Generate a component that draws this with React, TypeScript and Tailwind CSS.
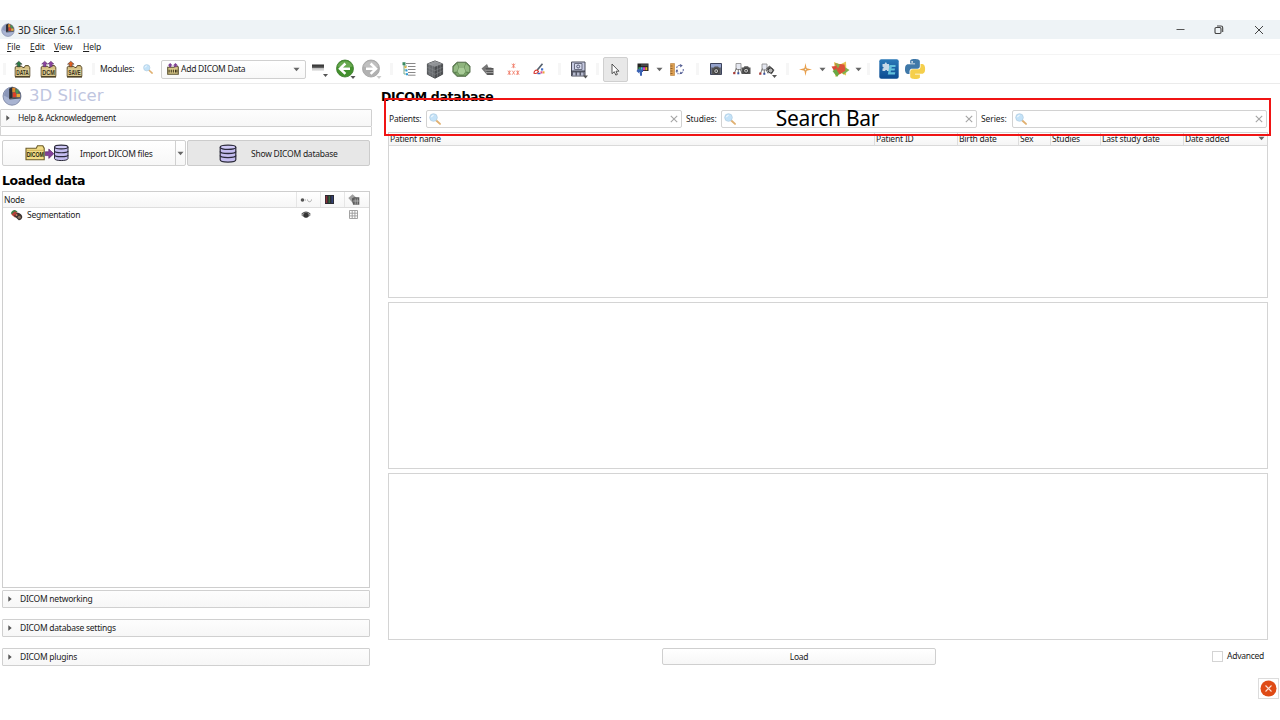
import React from "react";

type Kids = { children?: React.ReactNode };

const Svg = ({ w, h, vb, children, className = "" }: { w: number; h: number; vb?: string; className?: string } & Kids) => (
  <svg width={w} height={h} viewBox={vb ?? `0 0 ${w} ${h}`} className={"block shrink-0 overflow-visible " + className}>
    {children}
  </svg>
);

const Slot = ({ w, children }: { w: string } & Kids) => (
  <div className={"flex h-full shrink-0 items-center justify-center " + w}>{children}</div>
);

const Grip = ({ w }: { w: string }) => (
  <div className={"flex h-full shrink-0 items-center justify-center " + w}>
    <div className="h-3 w-[3px] bg-[#f6f6f6]" />
  </div>
);

const Down = () => (
  <Svg w={7} h={5}>
    <path d="M0.5 0.8h6L3.5 4.3z" fill="#666" />
  </Svg>
);

const SlicerLogo = ({ s }: { s: number }) => (
  <Svg w={s} h={s} vb="0 0 20 20">
    <circle cx="10" cy="10.2" r="9" fill="#a9b4d2" stroke="#7d87a5" strokeWidth="0.9" />
    <path d="M7.600 2A8.400 8.400 0 0 0 2 9.500l5.600 3z" fill="#8b97b9" />
    <path d="M7.300 2.500L10.500.8l4 1.700 4 4.500v4.500l-11.200 1.300z" fill="#54575f" />
    <path d="M7.300 2.800l3-1.600v10.600l-3 1.200z" fill="#2b2d33" />
    <path d="M10.300 1.800h3v4.500h-3z" fill="#df8a2c" />
    <path d="M13.600 3.500h2.800v4h-2.800z" fill="#4a9650" />
    <path d="M10.700 6.500h3.300v4.700h-3.300z" fill="#dd3f27" />
    <path d="M14.500 7.800h3.500v3.400h-3.500z" fill="#e6a93a" />
    <path d="M7.500 13l11-1.100" stroke="#4a4d55" strokeWidth="1.100" />
  </Svg>
);

const FolderIcon = ({ label, color, two }: { label: string; color: string; two?: boolean }) => (
  <Svg w={17} h={17}>
    <path d="M1.200 15.500V6.200l1-.9h5.600l.9 1.200h1.600l1-1.900h3.200l1.300 2v8.900z" fill="#d6c183" stroke="#57492a" strokeWidth="1" />
    <path d="M1.700 7.800h13.600v7H1.700z" fill="#dccb92" />
    {two ? (
      <path d="M4.700.2l3 2.800H6v2.700H3.400V3H1.700zM10.900.2l3 2.800h-1.700v2.700H9.600V3H7.900z" fill={color} stroke="#54305f" strokeWidth=".5" />
    ) : (
      <path d="M4.800.2l3.300 3H6.200v2.600H3.400V3.200H1.500z" fill={color} stroke="#333" strokeWidth=".5" />
    )}
    <text x="8.500" y="13.700" letterSpacing="0" textAnchor="middle" textLength="12.500" lengthAdjust="spacingAndGlyphs" fontFamily="Liberation Sans" fontWeight="bold" fontSize="6.500" fill="#3a321c">
      {label}
    </text>
    <path d="M1 16h15" stroke="#4a3f22" strokeWidth="1.200" />
  </Svg>
);

const Magnifier = ({ s }: { s: number }) => (
  <Svg w={s} h={s} vb="0 0 12 12">
    <path d="M7 7.200l4 3.700" stroke="#e0b070" strokeWidth="1.900" strokeLinecap="round" />
    <circle cx="4.500" cy="4.500" r="3.800" fill="#c3e2f8" stroke="#b3cee2" strokeWidth="0.800" />
    <path d="M2.500 4.200a2.200 2.200 0 0 1 2-1.800" stroke="#fff" strokeWidth="1" fill="none" />
  </Svg>
);

const Corner = ({ x, y, c = "#555" }: { x: number; y: number; c?: string }) => (
  <path d={`M${x} ${y}h5l-2.5 3z`} fill={c} />
);

const RoundArrow = ({ back }: { back?: boolean }) => (
  <Svg w={21} h={21}>
    <circle cx="10" cy="9.500" r="8.500" fill={back ? "#43902e" : "#b1b1b1"} stroke={back ? "#3a7a2a" : "#a0a0a0"} strokeWidth="0.800" />
    <path d="M2.500 7.500a8 8 0 0 1 15 0q-7 2-15 0z" fill={back ? "#68a950" : "#c0c0c0"} />
    <path
      d={back ? "M10.400 4.500L5 9.700l5.400 5.200M5.500 9.700H15" : "M9.600 4.500L15 9.700l-5.400 5.200M14.500 9.700H5"}
      fill="none" stroke="#fff" strokeWidth="2.500"
    />
    <Corner x={15.500} y={17} c={back ? "#555" : "#ccc"} />
  </Svg>
);

const Database = ({ w, h }: { w: number; h: number }) => (
  <Svg w={w} h={h} vb="0 0 18 19">
    <path d="M1.200 3.200v12.600c0 3 15.600 3 15.600 0V3.200" fill="#c4bdf0" stroke="#2b2a3b" strokeWidth="1.200" />
    <ellipse cx="9" cy="3.300" rx="7.800" ry="2.100" fill="#d0caf8" stroke="#2b2a3b" strokeWidth="1.300" />
    <path d="M1.200 7.500c0 2.700 15.600 2.700 15.600 0M1.200 11.600c0 2.700 15.600 2.700 15.600 0" fill="none" stroke="#2b2a3b" strokeWidth="1.400" />
  </Svg>
);

const DicomImport = () => (
  <Svg w={44} h={18}>
    <path d="M1 15.800V4.200h10.300l1.200-2.500h5.300l1.400 2.500v11.600z" fill="#f1dc87" stroke="#6b5b28" strokeWidth="1.100" />
    <path d="M1.500 6.300h17.500" stroke="#c8ab4b" strokeWidth=".8" />
    <text x="10.200" y="12.600" letterSpacing="0" textAnchor="middle" textLength="17" lengthAdjust="spacingAndGlyphs" fontFamily="Liberation Sans" fontWeight="bold" fontSize="6.500" fill="#221c0a">DICOM</text>
    <path d="M20.300 7.800h3.500V5l5 4.700-5 4.700v-2.800h-3.500z" fill="#83409a" stroke="#5c2a6c" strokeWidth=".7" />
    <path d="M29.500 3v11.600c0 2.600 13.500 2.600 13.500 0V3" fill="#c4bdf0" stroke="#2b2a3b" />
    <ellipse cx="36.250" cy="3" rx="6.750" ry="1.900" fill="#d0caf8" stroke="#2b2a3b" strokeWidth="1.100" />
    <path d="M29.500 7c0 2.300 13.500 2.300 13.500 0M29.500 10.900c0 2.300 13.500 2.300 13.500 0" fill="none" stroke="#2b2a3b" strokeWidth="1.200" />
  </Svg>
);

const Camera = ({ x, y }: { x: number; y: number }) => (
  <g transform={`translate(${x} ${y})`}>
    <path d="M0 1.500h2L3 .2h3.500l1 1.300H9V8H0z" fill="#555" />
    <circle cx="4.600" cy="4.700" r="2.400" fill="#c9c9c9" stroke="#222" strokeWidth=".8" />
    <circle cx="4.600" cy="4.700" r=".9" fill="#444" />
  </g>
);

const SceneGlyph = () => (
  <g>
    <path d="M3 1.500h5v6H3z" fill="#e4e7f0" stroke="#888" strokeWidth=".8" />
    <path d="M3.500 6L1 12M7 7l2 4M5.300 7v4" stroke="#666" strokeWidth=".9" fill="none" />
    <path d="M.2 10h2.200v2.200H.2z" fill="#a93c36" />
    <path d="M4.300 10.300h2v2h-2z" fill="#38529d" />
  </g>
);

const Toolbar = () => (
  <div className="flex h-[30px] items-center border-y border-b-[#ebebeb] border-t-[#f4f4f4]">
    <Grip w="w-[9px]" />
    <Slot w="w-[26px]"><FolderIcon label="DATA" color="#2c7a45" /></Slot>
    <Slot w="w-[26px]"><FolderIcon label="DCM" color="#8a44a0" two /></Slot>
    <Slot w="w-[26px]"><FolderIcon label="SAVE" color="#e2601f" /></Slot>
    <Grip w="w-[13px]" />
    <div className="w-[34px] shrink-0 whitespace-nowrap pt-px tracking-[-0.3px]">Modules:</div>
    <Slot w="w-[27px]"><Magnifier s={10} /></Slot>
    <div className="flex h-[19px] w-[145px] shrink-0 items-center rounded-[2px] border border-[#d0d0d0] bg-gradient-to-b from-white to-[#f8f8f8] pl-[5px] pr-[5px]">
      <Svg w={12} h={12} vb="0 0 17 17">
        <path d="M1 16V6h9l1-1.500h4L16 6v10z" fill="#d9c888" stroke="#5a512e" strokeWidth="1.500" />
        <path d="M4.500 0l3.500 3.500H6V6H3V3.500H1zM12 0l3.500 3.500H13.500V6h-3V3.500H8.500z" fill="#7c3f92" />
        <path d="M3 9.500v4M6 9.500v4M9 9.500v4M12 9.500v4M14 9.500v4" stroke="#28220f" strokeWidth="1.300" />
      </Svg>
      <span className="ml-[2px] flex-1 whitespace-nowrap pt-px">Add DICOM Data</span>
      <Down />
    </div>
    <Slot w="w-[28px]">
      <Svg w={16} h={16}>
        <defs><linearGradient id="bar" x1="0" y1="0" x2="0" y2="1"><stop offset="0" stopColor="#2c2c2c" /><stop offset=".45" stopColor="#555" /><stop offset=".55" stopColor="#bbb" /><stop offset="1" stopColor="#eee" /></linearGradient></defs>
        <path d="M0 3.500h12v6.500H0z" fill="url(#bar)" />
        <Corner x={11} y={13} />
      </Svg>
    </Slot>
    <Slot w="w-[23px]"><RoundArrow back /></Slot>
    <Slot w="w-[28px]"><RoundArrow /></Slot>
    <Grip w="w-[12px]" />
    <Slot w="w-[24px]">
      <Svg w={14} h={14}>
        <path d="M2 1v11M2 4h3M2 8h3M2 12h3" stroke="#7fae90" fill="none" />
        <path d="M4 1.500h9.500M6 4.500h7.500M6 7.500h7.500M6 10.500h7.500M6 13.200h7.500" stroke="#888" />
        <path d="M.5.200h3v3h-3z" fill="#3c8c62" /><path d="M2.500 4.200h2v2h-2z" fill="#e4b23c" /><path d="M3.500 7.500h2v2h-2zM4 11.300h2v2h-2z" fill="#2e9ad8" />
      </Svg>
    </Slot>
    <Slot w="w-[27px]">
      <Svg w={18} h={19}>
        <path d="M9 .9l7.600 3v10.300L9 18.200 1.400 14.200V3.900z" fill="#66696c" stroke="#505254" />
        <path d="M9 .9l7.600 3L9 6.800 1.400 3.900z" fill="#9b9da0" />
        <path d="M9 6.800l7.600-2.900v10.300L9 18.200z" fill="#4c4e51" />
        <path d="M3.800 5v10M6.400 6v10.500M11.600 6v10.500M14.200 5v10M1.400 7.300L9 10.600l7.600-3.300M1.400 10.700L9 14.400l7.600-3.700M3.800 3l7.700 3M6.400 2l7.700 3M14 3L6.400 6" stroke="#85888b" strokeWidth=".6" fill="none" />
      </Svg>
    </Slot>
    <Slot w="w-[26px]">
      <Svg w={19} h={17}>
        <path d="M5 1.200h9l4 4v6L14 15.300H5L.9 11.300v-6z" fill="#5f8552" stroke="#5a7350" />
        <path d="M5.500 2h8L12 6.500H7z" fill="#8fb57e" /><path d="M7 6.500h5l1.500 4-2 3h-4l-2-3z" fill="#a9cc98" />
        <path d="M5 2.500l1.500 4-1.500 4-3.300.5V6zM14 2.500l-1.500 4 1.500 4 3.300.5V6z" fill="#94ba83" />
        <path d="M5.500 11l2 3.500h-2l-2-2zM13.500 11l-2 3.500h2l2-2z" fill="#79a368" />
      </Svg>
    </Slot>
    <Slot w="w-[27px]">
      <Svg w={13} h={13}>
        <path d="M.5 5.500L6 1l1.500 3.500h3V12H6z" fill="#777" /><path d="M4.500 5h8v7h-6z" fill="#555" />
        <path d="M4.500 7.200h8M5 9.600h7.500" stroke="#c4c4c4" strokeWidth=".7" />
      </Svg>
    </Slot>
    <Slot w="w-[25px]">
      <Svg w={13} h={13}>
        <path d="M4.800.8l3.400 4m0-4l-3.400 4M6.500.4v4.800M.8 7.700l3 4m0-4l-3 4M2.300 7.400v4.600M5.300 7.700l2.500 4m0-4l-2.500 4M9.300 7.700l2.900 4m0-4l-2.900 4M10.700 7.400v4.600" stroke="#f07a66" strokeWidth=".8" />
      </Svg>
    </Slot>
    <Slot w="w-[26px]">
      <Svg w={12} h={12}>
        <path d="M9.500.8L4.300 7" stroke="#55606e" strokeWidth="1.700" />
        <path d="M1 10.300q0-3 3-3.300l1.500 1.500q-1 2.500-4.500 1.800z" fill="none" stroke="#d93a32" strokeWidth="1.100" />
        <path d="M4.500 10.500h3" stroke="#3e68c4" strokeWidth="1.500" />
        <path d="M8 5.300h2.200v2.200H8z" fill="#4672c8" /><path d="M7.500 8.300h2v2.200h-2z" fill="#e14a92" /><path d="M9.700 8.300h1.800v2.200H9.700z" fill="#eba43a" />
      </Svg>
    </Slot>
    <Grip w="w-[14px]" />
    <Slot w="w-[26px]">
      <Svg w={18} h={19}>
        <path d="M1.500 2h13.500v14H1.500z" fill="#c6cae2" stroke="#4d4f5c" />
        <path d="M4.500 3.500h7.500v6H4.500z" fill="#d5d9ec" stroke="#6a6d80" /><circle cx="8.200" cy="6.500" r="1.500" fill="none" stroke="#505672" />
        <path d="M1.500 11.200h13.500" stroke="#343640" strokeWidth="1.300" /><path d="M2 11.500h12.500v4H2z" fill="#555866" />
        <path d="M3 12.500h2.500v3H3zM7 12.500h2.500v3H7zM11 12.500h2.500v3H11z" fill="#b5b9cd" />
        <Corner x={13} y={15.500} />
      </Svg>
    </Slot>
    <Grip w="w-[11px]" />
    <div className="flex h-[25px] w-[25px] shrink-0 items-center justify-center rounded-[2px] border border-[#cfcfcf] bg-[#e8e8e8]">
      <Svg w={9} h={13}>
        <path d="M1 1v9.700l2.300-2 1.500 3.400 1.600-.7L5 8.200h3z" fill="#fff" stroke="#444" strokeWidth=".9" />
      </Svg>
    </div>
    <Slot w="w-[28px]">
      <Svg w={13} h={13}>
        <path d="M1.500.500h11v7.500h-11z" fill="#222" />
        <path d="M5 1.200h6.800v2H5z" fill="#4a4a4a" />
        <path d="M2.500 4.200h2v3h-2z" fill="#36a24b" /><path d="M4.700 4.200h2v3h-2z" fill="#4cb6ed" /><path d="M7 4.200h2v3H7z" fill="#d93bc2" /><path d="M9.300 4.200h2v3h-2z" fill="#e7b52c" />
        <path d="M7 6.500H3.500V5L.4 8l3.100 2.800V9H4v3.800h2V9h1z" fill="#3a62b4" />
      </Svg>
    </Slot>
    <Slot w="w-[7px]"><Down /></Slot>
    <Slot w="w-[28px]">
      <Svg w={14} h={13}>
        <path d="M.5.500h4v12h-4z" fill="#dda052" stroke="#b97f3a" strokeWidth=".6" />
        <path d="M.5 3h2M.5 5.500h2M.5 8h2M.5 10.500h2" stroke="#74471a" strokeWidth=".7" />
        <path d="M6.500 5q1-3 4-2.500M13.300 6q.3 3-2 4M6.500 7.500q.3 2.500 2 3.500" stroke="#7d86b4" strokeWidth="1.300" strokeDasharray="2 .8" fill="none" />
        <path d="M10 1l2.800 1.500L10.300 4.500zM12.300 10.800l-3 .5 1.500-2.800zM5.500 8.500L7 6l1.300 2.500z" fill="#515b90" />
      </Svg>
    </Slot>
    <Grip w="w-[12px]" />
    <Slot w="w-[26px]">
      <Svg w={12} h={12}><path d="M.5.500h11v11H.5z" fill="#77839f" stroke="#3c435c" /><path d="M1 1h10v3H1z" fill="#95a3cc" /><Camera x={1.600} y={3.400} /></Svg>
    </Slot>
    <Slot w="w-[26px]"><Svg w={18} h={14}><SceneGlyph /><Camera x={8.500} y={4} /></Svg></Slot>
    <Slot w="w-[27px]">
      <Svg w={19} h={17}>
        <g transform="translate(0 1.500)"><SceneGlyph /></g>
        <path d="M7 7.500l3.500-3 5 4.500-3 4.500z" fill="#666" /><circle cx="11.500" cy="9.500" r="2.500" fill="#b5b5b5" stroke="#333" />
        <Corner x={13} y={14} />
      </Svg>
    </Slot>
    <Grip w="w-[10px]" />
    <Slot w="w-[26px]">
      <Svg w={13} h={13}><path d="M6.500 0l1.100 5.200 5.400 1.300-5.400 1.300-1.100 5.200-1.100-5.200L0 6.500l5.400-1.300z" fill="#eba04a" /><circle cx="6.500" cy="6.500" r="1.200" fill="#fff3dc" stroke="#b86e1d" strokeWidth=".5" /></Svg>
    </Slot>
    <Slot w="w-[8px]"><Down /></Slot>
    <Slot w="w-[28px]">
      <Svg w={19} h={17}>
        <path d="M3 1l6 2.500L15 .5l.3 7-.3 7-5-2.500-5.500 4z" fill="#e8c555" />
        <path d="M.5 5.500L5 5l3 4-3 4.500z" fill="#d9493a" />
        <path d="M1.500 10l5-3 4 3-4.500 6z" fill="#6aa843" />
        <path d="M12 5l6.500 4-6 4.500-3-4z" fill="#7fb24e" />
        <path d="M4 2.500l9.500 1 1 6-6 4-2.500-4z" fill="#dc5339" />
        <path d="M4 2l5 1.500-2 4z" fill="#8cb04c" />
      </Svg>
    </Slot>
    <Slot w="w-[8px]"><Down /></Slot>
    <Grip w="w-[13px]" />
    <Slot w="w-[28px]">
      <Svg w={20} h={20}>
        <defs><linearGradient id="ext" x1="0" y1="0" x2="0" y2="1"><stop offset="0" stopColor="#2b79b8" /><stop offset="1" stopColor="#0b4a91" /></linearGradient></defs>
        <rect x=".3" y=".3" width="19.400" height="19.400" rx="2" fill="url(#ext)" />
        <path d="M3.500 5h2.300c-.5-2 2.500-2 2 0h2.300v2.300c1.800-.5 1.800 2 0 1.800v3H8c.3-1.500-2-1.500-1.800 0H3.500V9.500c1.500.2 1.500-2 0-1.800z" fill="#c7d9e8" />
        <path d="M10.500 6h6v2h-3.700l-.4 1.500H16l-.4 2h-3.600l-.4 1.800h4.700l-.4 2.200H8.800z" fill="#62c0dc" />
      </Svg>
    </Slot>
    <Slot w="w-[24px]">
      <Svg w={20} h={20} vb="0 0 24 24">
        <path fill="#3f78a8" d="M14.250.18l.9.2.73.26.59.3.45.32.34.34.25.34.16.33.1.3.04.26.02.2-.01.13V8.500l-.05.63-.13.55-.21.46-.26.38-.3.31-.33.25-.35.19-.35.14-.33.1-.3.07-.26.04-.21.02H8.770l-.69.05-.59.14-.5.22-.41.27-.33.32-.27.35-.2.36-.15.37-.1.35-.07.32-.04.27-.02.21v3.060H3.170l-.21-.03-.28-.07-.32-.12-.35-.18-.36-.26-.36-.36-.35-.46-.32-.59-.28-.73-.21-.88-.14-1.050L0 11.970l.06-1.220.16-1.040.24-.87.32-.71.36-.57.4-.44.42-.33.42-.24.4-.16.36-.1.32-.05.24-.01h.16l.06.01h8.160v-.83H6.180l-.01-2.750-.02-.37.05-.34.11-.31.17-.28.25-.26.31-.23.38-.2.44-.18.51-.15.58-.12.64-.1.71-.06.77-.04.84-.02 1.270.05zM8 2.700a1 1 0 1 0 1.300 1.500A1 1 0 0 0 8 2.700z" />
        <path fill="#f5cf4c" d="M21.100 6.110l.28.06.32.12.35.18.36.27.36.35.35.47.32.59.28.73.21.88.14 1.040.05 1.230-.06 1.230-.16 1.040-.24.86-.32.71-.36.57-.4.45-.42.33-.42.24-.4.16-.36.09-.32.05-.24.02-.16-.01h-8.220v.82h5.840l.01 2.760.02.36-.05.34-.11.31-.17.29-.25.25-.31.24-.38.2-.44.17-.51.15-.58.13-.64.09-.71.07-.77.04-.84.01-1.270-.04-1.070-.14-.9-.2-.73-.25-.59-.3-.45-.33-.34-.34-.25-.34-.16-.33-.1-.3-.04-.25-.02-.2.01-.13v-5.340l.05-.64.13-.54.21-.46.26-.38.3-.32.33-.24.35-.2.35-.14.33-.1.3-.06.26-.04.21-.02.13-.01h5.840l.69-.05.59-.14.5-.21.41-.28.33-.32.27-.35.2-.36.15-.36.1-.35.07-.32.04-.28.02-.21V6.070h2.090z" />
      </Svg>
    </Slot>
  </div>
);

const Section = ({ label, className = "" }: { label: string; className?: string }) => (
  <div className={"flex h-[18px] shrink-0 items-center rounded-[1px] border border-[#d0d0d0] bg-gradient-to-b from-[#fdfdfd] to-[#f7f7f7] " + className}>
    <Svg w={4} h={6}><path d="M.3.200v5.600L3.700 3z" fill="#555" /></Svg>
    <span className="pt-px">{label}</span>
  </div>
);

const SearchField = ({ label, gap, w }: { label: string; gap: string; w: string }) => (
  <>
    <span className={"shrink-0 whitespace-nowrap pt-px " + gap}>{label}</span>
    <div className={"flex h-[18px] shrink-0 items-center justify-between rounded-[2px] border border-[#d2d2d2] bg-white pl-[2px] pr-[3px] " + w}>
      <Magnifier s={12} />
      <Svg w={8} h={8}><path d="M.8.800l6.400 6.400M7.200.800L.8 7.200" stroke="#a5a5a5" strokeWidth="1.100" /></Svg>
    </div>
  </>
);

const columns = [
  { label: "Patient name", w: "w-[486px]" },
  { label: "Patient ID", w: "w-[83px]" },
  { label: "Birth date", w: "w-[61px]" },
  { label: "Sex", w: "w-[32px]" },
  { label: "Studies", w: "w-[50px]" },
  { label: "Last study date", w: "w-[83px]" },
  { label: "Date added", w: "flex-1" },
];

const menu = [
  { label: "File", w: "w-[23px]" },
  { label: "Edit", w: "w-[24px]" },
  { label: "View", w: "w-[29px]" },
  { label: "Help", w: "w-[24px]" },
];

const LeftPanel = () => (
  <div className="flex w-[372px] shrink-0 flex-col">
    <div className="flex h-[25px] items-center pb-px pl-[2px]">
      <SlicerLogo s={20} />
      <span className="ml-[7px] pt-px font-['DejaVu_Sans',sans-serif] text-[16.5px] leading-none tracking-[0.05px] text-[#bfc6df]">3D Slicer</span>
    </div>
    <Section label="Help & Acknowledgement" className="gap-[8px] pl-[5px]" />
    <div className="h-[9px] shrink-0 border border-t-0 border-[#d4d4d4]" />
    <div className="mt-[4px] flex h-[26px] shrink-0 gap-[1px] pl-[2px] pr-[2px]">
      <div className="flex w-[184px] rounded-[2px] border border-[#d0d0d0] bg-gradient-to-b from-white to-[#f7f7f7]">
        <div className="flex flex-1 items-center pl-[22px]">
          <DicomImport />
          <span className="ml-[11px] whitespace-nowrap pt-[2px]">Import DICOM files</span>
        </div>
        <div className="flex w-[10px] items-center justify-center border-l border-[#d0d0d0]"><Down /></div>
      </div>
      <div className="flex flex-1 items-center rounded-[2px] border border-[#cccccc] bg-[#e7e7e7] pl-[31px]">
        <Database w={18} h={19} />
        <span className="ml-[14px] whitespace-nowrap pt-[2px]">Show DICOM database</span>
      </div>
    </div>
    <div className="flex h-[25px] shrink-0 items-center pl-[2px] pt-[6px] font-['DejaVu_Sans',sans-serif] text-[12.5px] font-bold leading-none tracking-[-0.4px] text-black">Loaded data</div>
    <div className="ml-[2px] mr-[2px] flex h-[397px] shrink-0 flex-col border border-[#cecece]">
      <div className="flex h-[16px] shrink-0 border-b border-[#dedede] bg-gradient-to-b from-white to-[#f6f6f6]">
        <div className="flex flex-1 items-center pl-[1px] pt-px">Node</div>
        <div className="flex w-[24px] items-center justify-center border-l border-[#e6e6e6] pr-[6px]">
          <Svg w={12} h={6}><circle cx="2.500" cy="3" r="1.800" fill="#555" /><path d="M5 3h1" stroke="#aaa" /><path d="M7.500 2.500c0 3 4 3 4 0" stroke="#aaa" fill="none" /></Svg>
        </div>
        <div className="flex w-[24px] items-center justify-center border-l border-[#e6e6e6] pr-[6px]">
          <Svg w={9} h={9}><path d="M0 0h9v9H0z" fill="#2b2b33" /><path d="M1.500 1v7" stroke="#8c3038" strokeWidth="1.500" /><path d="M4.300 1v7" stroke="#35663c" strokeWidth="1.500" /><path d="M7.200 1v7" stroke="#33437a" strokeWidth="1.500" /></Svg>
        </div>
        <div className="flex w-[25px] items-center justify-center border-l border-[#e6e6e6] pr-[7px]">
          <Svg w={12} h={11}><path d="M.3 4L4.500.3l4.500 4-4 5z" fill="#a0a0a0" /><path d="M3.800 4.500L6 3.300h5.300V10.700H5z" fill="#5c5c5c" /><path d="M5 7h6M7.200 4.500v6M9.300 4.500v6" stroke="#d0d0d0" strokeWidth=".6" /></Svg>
        </div>
      </div>
      <div className="flex h-[13px] items-center pl-[7px]">
        <Svg w={13} h={12}>
          <path d="M.8 4.500Q2 .8 5 1l2.500 1.500L4 6z" fill="#397c45" /><path d="M1.300 5.500l3.500-3.300 4 2.600-3.600 4z" fill="#b54038" />
          <path d="M4 6.800l3.500-3.300q4.500 1 4.800 4.500-.5 3-3.500 3.300z" fill="#3d3532" /><circle cx="9.300" cy="8.300" r="1.500" fill="#8e7761" /><circle cx="6.500" cy="6" r="1" fill="#d07a58" />
        </Svg>
        <span className="ml-[4px] flex-1 pt-[2px]">Segmentation</span>
        <div className="flex w-[20px] justify-center">
          <Svg w={10} h={8}><path d="M.3 4.200Q5-1.500 9.700 4.200 5 8.800.3 4.200z" fill="#888" /><path d="M.5 3Q5-1 9.500 3" stroke="#444" fill="none" /><circle cx="5" cy="4.200" r="2.500" fill="#333" /></Svg>
        </div>
        <div className="w-[27px]" />
        <div className="flex w-[26px] justify-center pr-[5px]">
          <Svg w={9} h={9}><path d="M.5.500h8v8h-8zM3.200.500v8M5.900.500v8M.5 3.200h8M.5 5.900h8" fill="none" stroke="#9a9a9a" strokeWidth=".9" /></Svg>
        </div>
      </div>
    </div>
    <div className="flex flex-col gap-[11px] px-[2px] pt-[2px]">
      <Section label="DICOM networking" className="gap-[8px] pl-[5px]" />
      <Section label="DICOM database settings" className="gap-[8px] pl-[5px]" />
      <Section label="DICOM plugins" className="gap-[8px] pl-[5px]" />
    </div>
  </div>
);

const RightPanel = () => (
  <div className="flex flex-1 flex-col pl-[9px]">
    <div className="flex h-[25px] shrink-0 items-center pt-[2px] font-['DejaVu_Sans',sans-serif] text-[12.5px] font-bold leading-none tracking-[-0.3px] text-black">DICOM database</div>
    <div className="flex h-[19px] shrink-0 items-center pl-[8px]">
      <SearchField label="Patients:" gap="w-[37px]" w="w-[256px]" />
      <SearchField label="Studies:" gap="ml-[4px] w-[35px] tracking-[-0.1px]" w="w-[256px]" />
      <SearchField label="Series:" gap="ml-[4px] w-[31px] tracking-[-0.1px]" w="w-[255px]" />
    </div>
    <div className="mt-[4px] flex flex-1 flex-col pl-[7px] pr-[12px]">
      <div className="h-[166px] shrink-0 border border-[#d4d4d4]">
        <div className="flex h-[13px] border-b border-[#dadada] bg-gradient-to-b from-white to-[#f5f5f5]">
          {columns.map((c) => (
            <div key={c.label} className={"flex items-center whitespace-nowrap border-r border-[#dddddd] pl-[1px] tracking-[-0.2px] last:border-r-0 " + c.w}>
              {c.label}
              {c.label === "Date added" && <div className="ml-auto pb-[2px] pr-[2px]"><Down /></div>}
            </div>
          ))}
        </div>
      </div>
      <div className="mt-[4px] h-[167px] shrink-0 border border-[#d4d4d4]" />
      <div className="mt-[4px] h-[167px] shrink-0 border border-[#d4d4d4]" />
      <div className="mt-[8px] flex items-center">
        <div className="ml-[274px] flex h-[17px] w-[274px] items-center justify-center rounded-[2px] border border-[#cfcfcf] bg-gradient-to-b from-white to-[#f7f7f7] pt-px">Load</div>
        <div className="ml-auto flex items-center pr-[4px]">
          <div className="mr-[4px] h-[11px] w-[11px] border border-[#d4d4d4] bg-white" />
          <span className="w-[37px] whitespace-nowrap">Advanced</span>
        </div>
      </div>
      <div className="-mr-[11px] mt-[13px] flex h-[21px] w-[21px] items-center justify-center self-end border border-[#dcdcdc]">
        <Svg w={17} h={17}><circle cx="8.500" cy="8.500" r="8" fill="#df4b16" /><path d="M5.500 5.500l6 6M11.500 5.500l-6 6" stroke="#fbe0d5" strokeWidth="1.100" /></Svg>
      </div>
    </div>
  </div>
);

export default function App() {
  return (
    <div className="relative flex h-[720px] w-[1280px] flex-col overflow-hidden bg-white pt-[20px] font-['Noto_Sans',sans-serif] text-[8.5px] leading-none tracking-[-0.25px] text-[#222]">
      <div className="flex h-[19px] shrink-0 items-center bg-[#eef3f6] pl-[1px]">
        <SlicerLogo s={14} />
        <span className="ml-[3px] text-[10px] tracking-[-0.2px] text-[#222]">3D Slicer 5.6.1</span>
        <div className="ml-auto flex items-center pr-[16px]">
          <Svg w={9} h={10}><path d="M.5 4.500h8" stroke="#555" /></Svg>
          <Svg w={10} h={10} className="ml-[29px]"><rect x="1" y="2.500" width="6" height="6" rx="1.200" fill="none" stroke="#444" strokeWidth="1.100" /><path d="M3 1h4q1.700 0 1.700 1.700V7" fill="none" stroke="#444" strokeWidth="1.100" /></Svg>
          <Svg w={10} h={10} className="ml-[30px]"><path d="M1 1l8 8M9 1L1 9" stroke="#444" /></Svg>
        </div>
      </div>
      <div className="flex h-[15px] shrink-0 items-center pl-[7px] pt-px tracking-[-0.1px]">
        {menu.map((m) => (
          <span key={m.label} className={m.w}><span className="underline">{m.label[0]}</span>{m.label.slice(1)}</span>
        ))}
      </div>
      <Toolbar />
      <div className="flex flex-1">
        <LeftPanel />
        <RightPanel />
      </div>
      <div className="absolute left-[384px] top-[98px] flex h-[38px] w-[887px] items-center justify-center border-2 border-[#f01414] pt-[3px] font-['Noto_Sans',sans-serif] text-[21px] tracking-[-0.25px] text-black">
        <span>Search Bar</span>
      </div>
    </div>
  );
}
